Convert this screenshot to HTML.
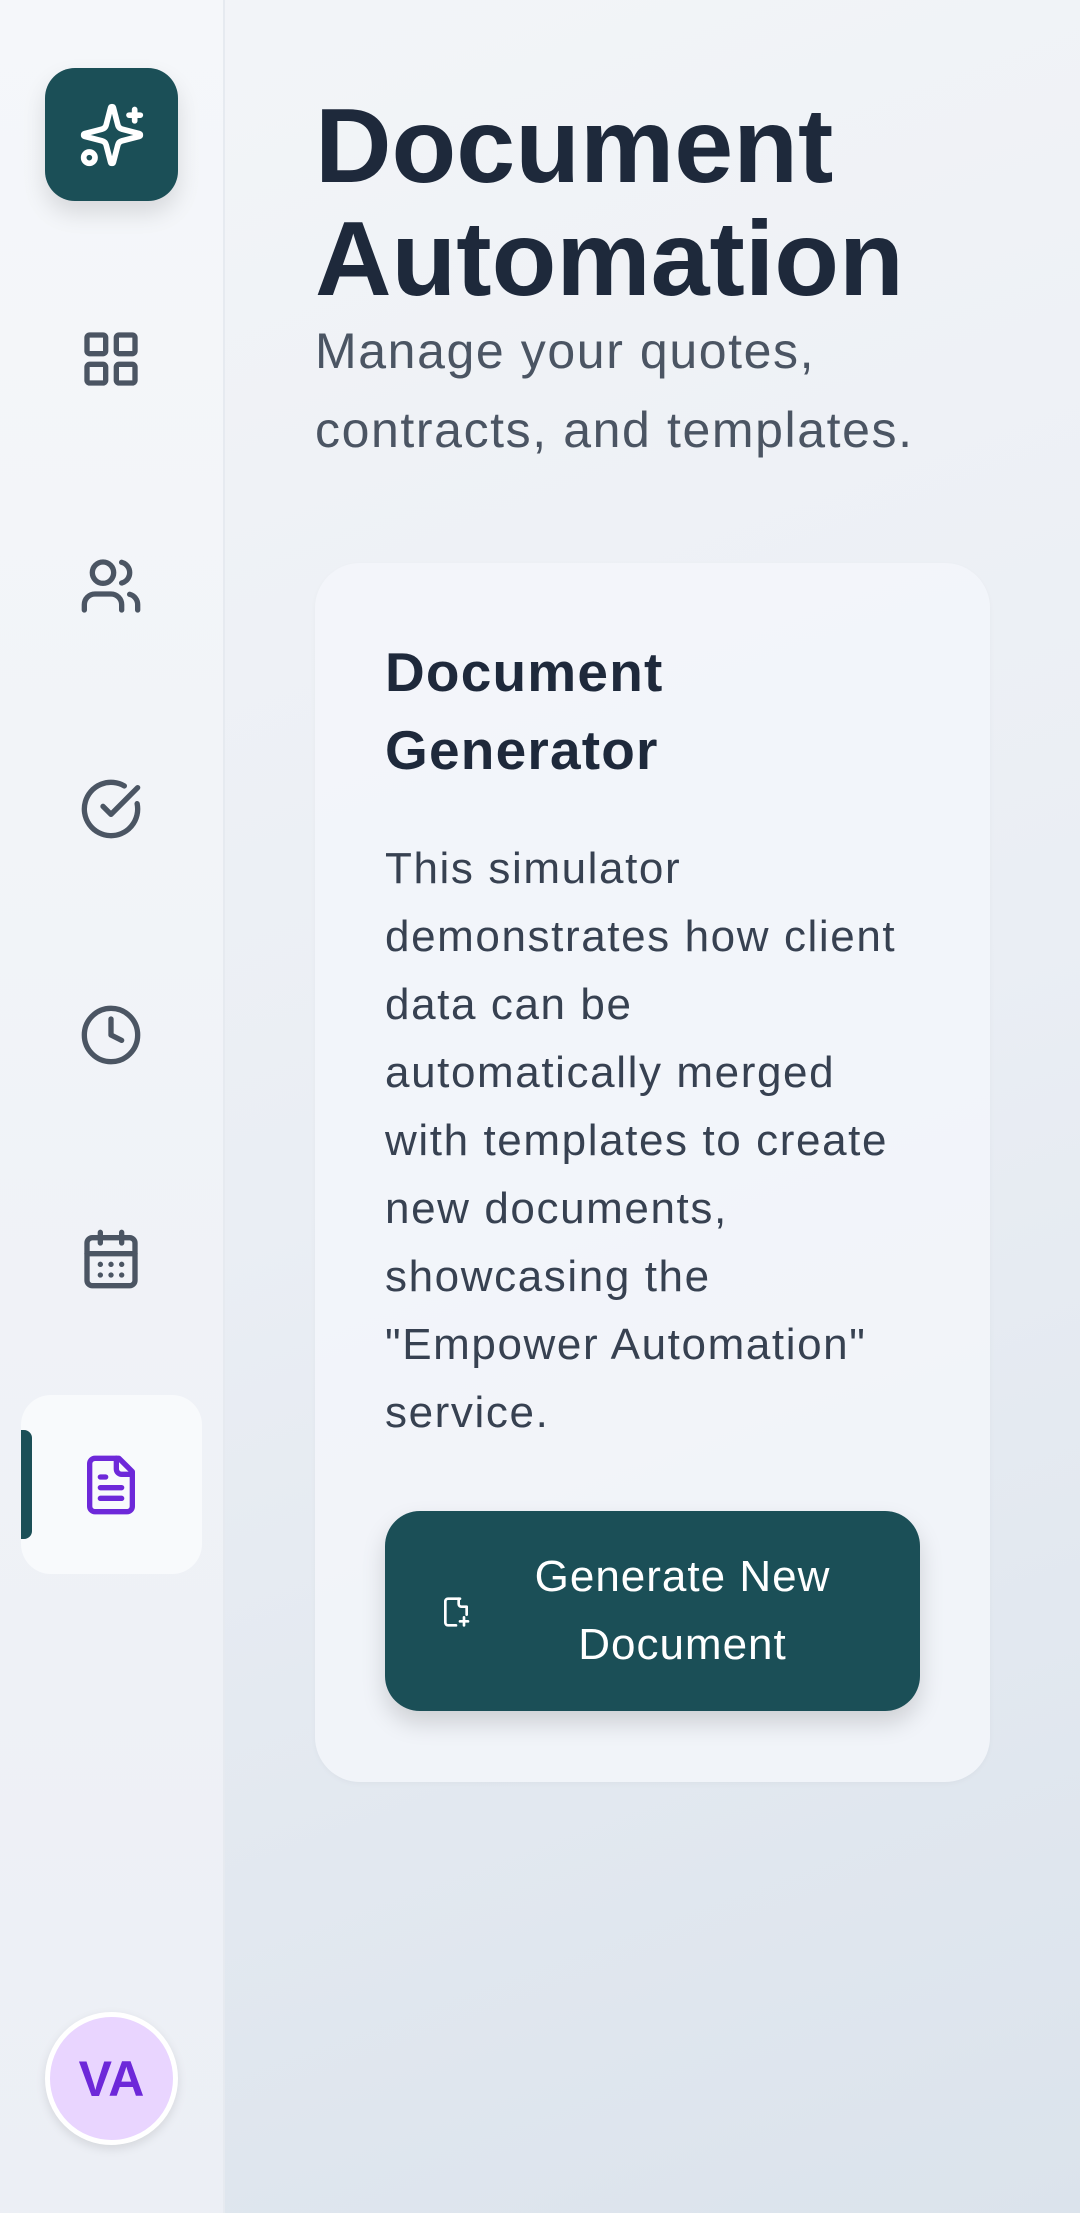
<!DOCTYPE html>
<html><head><meta charset="utf-8"><style>
*{margin:0;padding:0;box-sizing:border-box}
html,body{width:1080px;height:2213px;overflow:hidden}
body{font-family:"Liberation Sans",sans-serif;background:linear-gradient(160deg,#f3f5f8 0%,#eaeef4 50%,#dbe3ec 100%);position:relative}
.side{position:absolute;left:0;top:0;width:225px;height:2213px;background:linear-gradient(180deg,#f5f7fa,#eceff5);border-right:2px solid #e6eaf0}
.logo{position:absolute;left:45px;top:68px;width:133px;height:133px;border-radius:30px;background:#1b4f57;box-shadow:0 12px 24px rgba(0,0,0,.12);display:flex;align-items:center;justify-content:center}
.ic{position:absolute;left:79px;width:64px;height:64px}
.active{position:absolute;left:21px;top:1395px;width:181px;height:179px;border-radius:30px;background:#f8fafc}
.bar{position:absolute;left:21px;top:1430px;width:11px;height:109px;background:#1b4f57;border-radius:0 8px 8px 0}
.av{position:absolute;left:45px;top:2012px;width:133px;height:133px;border-radius:50%;background:#e9d5ff;border:5px solid #fff;box-shadow:0 4px 10px rgba(0,0,0,.1);display:flex;align-items:center;justify-content:center;color:#6d28d9;font-weight:bold;font-size:50px}
h1{position:absolute;left:315px;top:90px;font-size:106px;line-height:113px;color:#1e293b;font-weight:bold;white-space:nowrap}
.sub{position:absolute;left:315px;top:312px;font-size:50px;line-height:79px;color:#4b5563;white-space:nowrap;letter-spacing:1.6px}
.card{position:absolute;left:315px;top:563px;width:675px;height:1219px;border-radius:45px;background:rgba(243,246,250,.85);box-shadow:0 2px 6px rgba(0,0,0,.03)}
h2{position:absolute;left:70px;top:70px;font-size:55px;line-height:78px;color:#1e293b;font-weight:bold;white-space:nowrap;letter-spacing:1.2px}
.body{position:absolute;left:70px;top:272px;font-size:44px;line-height:68px;color:#374151;white-space:nowrap;letter-spacing:1.6px}
.btn{position:absolute;left:70px;top:948px;width:535px;height:200px;border-radius:35px;background:#1b4f57;box-shadow:0 12px 24px rgba(0,0,0,.15);color:#fff;font-size:44px;line-height:68px;text-align:center;letter-spacing:1px}
.btn .t{position:absolute;left:100px;right:40px;top:32px}
.btn svg{position:absolute;left:55px;top:85px}
</style></head><body>
<div class="side">
<div class="logo"><svg width="68" height="68" viewBox="0 0 24 24" fill="none" stroke="#fff" stroke-width="2" stroke-linecap="round" stroke-linejoin="round"><path d="M9.937 15.5A2 2 0 0 0 8.5 14.063l-6.135-1.582a.5.5 0 0 1 0-.962L8.5 9.936A2 2 0 0 0 9.937 8.5l1.582-6.135a.5.5 0 0 1 .963 0L14.063 8.5A2 2 0 0 0 15.5 9.937l6.135 1.581a.5.5 0 0 1 0 .964L15.5 14.063a2 2 0 0 0-1.437 1.437l-1.582 6.135a.5.5 0 0 1-.963 0z"/><path d="M20 3v4M22 5h-4"/><circle cx="4" cy="20" r="2"/></svg></div>
<svg class="ic" style="top:327px" viewBox="0 0 24 24" fill="none" stroke="#4b5563" stroke-width="2" stroke-linecap="round" stroke-linejoin="round"><rect x="3" y="3" width="7" height="7" rx="1"/><rect x="14" y="3" width="7" height="7" rx="1"/><rect x="14" y="14" width="7" height="7" rx="1"/><rect x="3" y="14" width="7" height="7" rx="1"/></svg>
<svg class="ic" style="top:554px" viewBox="0 0 24 24" fill="none" stroke="#4b5563" stroke-width="2" stroke-linecap="round" stroke-linejoin="round"><path d="M16 21v-2a4 4 0 0 0-4-4H6a4 4 0 0 0-4 4v2"/><circle cx="9" cy="7" r="4"/><path d="M22 21v-2a4 4 0 0 0-3-3.87M16 3.13a4 4 0 0 1 0 7.75"/></svg>
<svg class="ic" style="top:777px" viewBox="0 0 24 24" fill="none" stroke="#4b5563" stroke-width="2" stroke-linecap="round" stroke-linejoin="round"><path d="M21.801 10A10 10 0 1 1 17 3.335"/><path d="m9 11 3 3L22 4"/></svg>
<svg class="ic" style="top:1003px" viewBox="0 0 24 24" fill="none" stroke="#4b5563" stroke-width="2" stroke-linecap="round" stroke-linejoin="round"><circle cx="12" cy="12" r="10"/><path d="M12 6v6l4 2"/></svg>
<svg class="ic" style="top:1227px" viewBox="0 0 24 24" fill="none" stroke="#4b5563" stroke-width="2" stroke-linecap="round" stroke-linejoin="round"><rect x="3" y="4" width="18" height="18" rx="2"/><path d="M8 2v4M16 2v4M3 10h18M8 14h.01M12 14h.01M16 14h.01M8 18h.01M12 18h.01M16 18h.01"/></svg>
<div class="active"></div><div class="bar"></div>
<svg class="ic" style="top:1453px" viewBox="0 0 24 24" fill="none" stroke="#6d28d9" stroke-width="2" stroke-linecap="round" stroke-linejoin="round"><path d="M15 2H6a2 2 0 0 0-2 2v16a2 2 0 0 0 2 2h12a2 2 0 0 0 2-2V7Z"/><path d="M14 2v4a2 2 0 0 0 2 2h4M10 9H8M16 13H8M16 17H8"/></svg>
<div class="av">VA</div>
</div>
<h1>Document<br>Automation</h1>
<div class="sub">Manage your quotes,<br>contracts, and templates.</div>
<div class="card">
<h2>Document<br>Generator</h2>
<div class="body">This simulator<br>demonstrates how client<br>data can be<br>automatically merged<br>with templates to create<br>new documents,<br>showcasing the<br>"Empower Automation"<br>service.</div>
<div class="btn"><svg width="32" height="32" viewBox="0 0 24 24" fill="none" stroke="#fff" stroke-width="2" stroke-linecap="round" stroke-linejoin="round"><path d="M15 2H6a2 2 0 0 0-2 2v16a2 2 0 0 0 2 2h6"/><path d="M14 2v4a2 2 0 0 0 2 2h4v6M18 16v6M15 19h6"/></svg><div class="t">Generate New<br>Document</div></div>
</div>
</body></html>
